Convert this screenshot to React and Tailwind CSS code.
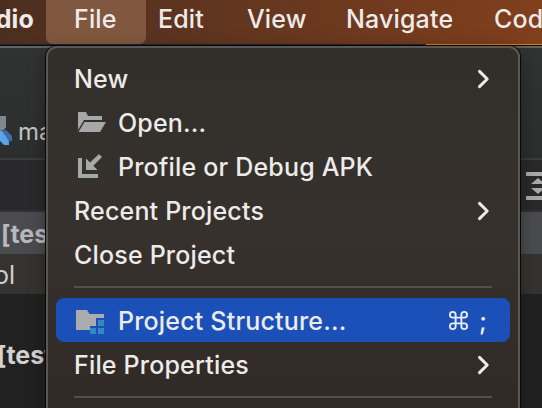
const Chevron = () => (
  <svg className="mt-px h-[22px] w-[14px]" viewBox="0 0 14 22" fill="none">
    <path d="M2.5 3.4L10.2 11L2.5 18.6" stroke="#edebea" strokeWidth="3" strokeLinecap="round" strokeLinejoin="round" />
  </svg>
);

const OpenIcon = () => (
  <svg className="h-7 w-8" viewBox="0 0 32 28">
    <path d="M4 4H12L14 8H28V12H10L4 22Z" fill="#a6a8a8" />
    <path d="M10.5 14H32L26 24H4.5Z" fill="#a6a8a8" />
  </svg>
);

const ApkIcon = () => (
  <svg className="h-7 w-8" viewBox="0 0 32 28">
    <path d="M4 6H8V22H24V26H4Z" fill="#a6a8a8" />
    <path d="M12 18V6.5L16 10.5L25 2L28 5L19.3 13.7L23.5 18Z" fill="#a6a8a8" />
  </svg>
);

const StructureIcon = () => (
  <svg className="h-7 w-8" viewBox="0 0 32 28">
    <path d="M2 4H13L15.5 8H30V12H22V20H16V24H2Z" fill="#a9abad" />
    <path d="M24 14H30V20H24ZM16 22H22V28H16ZM24 22H30V28H24Z" fill="#358abd" />
  </svg>
);

const Row = ({ label, icon, chevron, shortcut, selected }) => (
  <div className={`mx-2 flex h-11 shrink-0 items-center rounded-[8px] pl-[18px] ${selected ? "bg-[#1b50b8]" : ""}`}>
    {icon && <span className="mr-3 w-8 shrink-0">{icon}</span>}
    <span className="pt-[2px] tracking-[0.18px] whitespace-nowrap">{label}</span>
    <span className="ml-auto">
      {chevron && <span className="mr-[19px] block"><Chevron /></span>}
      {shortcut && (
        <span className="mr-[23px] flex items-center gap-[10px]">
          <svg className="mt-px size-[21px]" viewBox="0 0 22 22" fill="none" stroke="#e5ebf7" strokeWidth="2">
            <path d="M8 8V5A3 3 0 1 0 5 8H17A3 3 0 1 0 14 5V17A3 3 0 1 0 17 14H5A3 3 0 1 0 8 17Z" />
          </svg>
          <span className="pt-[2px]">;</span>
        </span>
      )}
    </span>
  </div>
);

const Separator = () => (
  <div className="flex h-[22px] shrink-0 items-center px-[26px]">
    <div className="h-0.5 w-full bg-[#52504c]" />
  </div>
);

export default function App() {
  return (
    <div className="relative flex h-[408px] w-[542px] flex-col overflow-hidden bg-[#212121] font-['Inter',sans-serif] text-[25px] leading-none font-medium text-[#edebea]">
      <header className="flex h-11 shrink-0 bg-linear-to-r from-[#4b2e20] via-[#66371f] to-[#813f1c] tracking-[0.15px] whitespace-nowrap">
        <div className="flex h-[38px] w-[46px] shrink-0 items-center justify-end pr-[12px] font-bold">dio</div>
        <div className="h-11 w-[100px] shrink-0 rounded-b-[7px] bg-[#80583f] pt-[7px] pl-[28px]">File</div>
        <nav className="flex pt-[7px]">
          <span className="w-[88px] shrink-0 pl-[12px]">Edit</span>
          <span className="w-[100px] shrink-0 pl-[13px]">View</span>
          <span className="w-[148px] shrink-0 pl-[12px]">Navigate</span>
          <span className="pl-[12px]">Code</span>
        </nav>
      </header>
      <div className="flex h-px shrink-0">
        <div className="w-[426px] bg-[#1b2638]" />
        <div className="flex-1 bg-[#db7d1a]" />
      </div>
      <div className="h-px shrink-0 bg-[#090b0e]" />
      <main className="flex flex-1 flex-col">
        <div className="flex h-[112px] shrink-0 items-end border-t-2 border-[#626462] bg-linear-to-b from-[#303332] to-[#2b2e2d] pb-[13px]">
          <svg className="h-[32px] w-[12px] shrink-0" viewBox="0 0 12 32">
            <path d="M0 3H6V14L4 17L0 18Z" fill="#7d898d" />
            <path d="M0 18L4 18L9 28V32H4L0 28Z" fill="#5aa3e5" />
            <path d="M2 18L6 17L12 23V28H9Z" fill="#4269a8" />
          </svg>
          <span className="mb-px ml-[6px] text-[24px] font-normal text-[#c4c4c3]">main</span>
        </div>
        <div className="flex h-[54px] shrink-0 justify-end border-t-2 border-b-2 border-t-[#3b3c3e] border-b-[#303133] bg-[#29292c]">
          <svg className="mt-[11px] h-[30px] w-[16px]" viewBox="0 0 16 30">
            <path d="M0 1H16V5H0ZM0 25H16V29H0ZM5 13L12 7L19 13ZM5 17H19L12 23Z" fill="#a9a9aa" />
          </svg>
        </div>
        <div className="flex h-[42px] shrink-0 items-center bg-[#494b4e] font-bold text-[#b8b9ba]">
          <span className="mt-[3px] ml-[1px]">[test</span>
        </div>
        <div className="flex h-[40px] shrink-0 items-center bg-[#34332f] font-normal text-[#d0d0ce]">
          <span className="mt-[2px] -ml-[6px]">ol</span>
        </div>
        <div className="flex flex-1 items-center font-bold text-[#d2d2d2]">
          <span className="mt-[9px] -ml-[3px]">[test</span>
        </div>
      </main>
      <div className="absolute top-[46px] left-[46px] flex h-[390px] w-[474px] flex-col rounded-[11px] border-2 border-[#5b5854] bg-linear-to-b from-[#322f2a] via-[#36312d] to-[#302824] pt-2 shadow-[0_0_0_1px_#080808,0_4px_18px_rgba(0,0,0,0.35)]">
        <Row label="New" chevron />
        <Row label="Open..." icon={<OpenIcon />} />
        <Row label="Profile or Debug APK" icon={<ApkIcon />} />
        <Row label="Recent Projects" chevron />
        <Row label="Close Project" />
        <Separator />
        <Row label="Project Structure..." icon={<StructureIcon />} shortcut selected />
        <Row label="File Properties" chevron />
        <Separator />
      </div>
    </div>
  );
}
